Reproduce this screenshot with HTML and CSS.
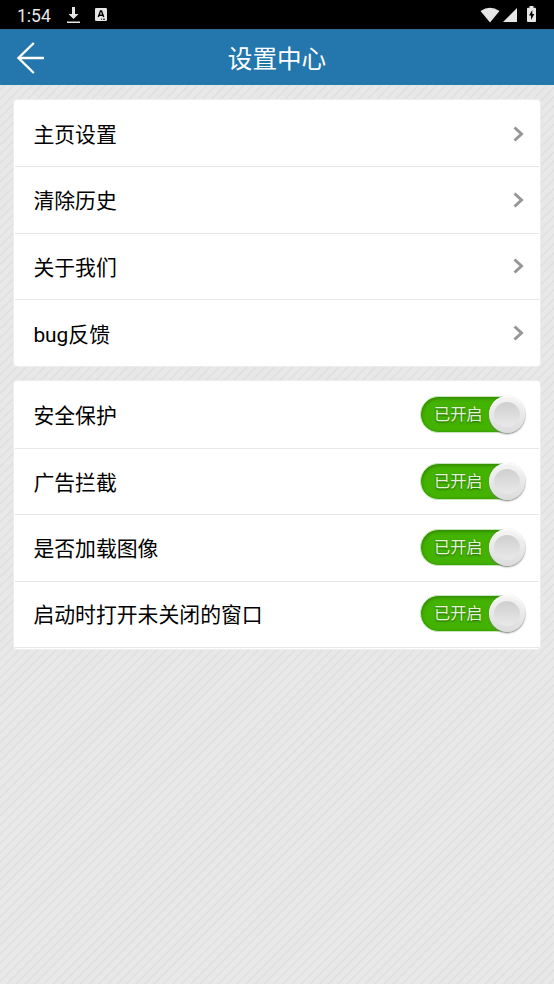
FILE: index.html
```html
<!DOCTYPE html>
<html lang="zh-CN">
<head>
<meta charset="utf-8">
<title>设置中心</title>
<link rel="stylesheet" href="styles.css">
</head>
<body>
<div class="status">
  <span class="time">1:54</span>
  <svg class="download" width="13" height="17" viewBox="0 0 13 17"><path d="M5 0h3v7h3.5L6.500 12 1.500 7H5zM0 14.500h13v1.600H0z" fill="#e6e6e6"/></svg>
  <svg class="keyboard" width="12" height="13" viewBox="0 0 12 13"><rect width="12" height="13" rx="1.300" fill="#e6e6e6"/><path d="M3.300 9 5.500 3h1L8.700 9M4.100 7.200h3.800" fill="none" stroke="#000" stroke-width="1.400"/><path d="M6 11.200h1M8 11.200h2" stroke="#000"/></svg>
  <span class="spacer"></span>
  <svg class="wifi" width="20" height="16" viewBox="0 0 20 16"><path d="M.5 4Q10-2.600 19.500 4L10 15.500z" fill="#e6e6e6"/></svg>
  <svg class="signal" width="14" height="14" viewBox="0 0 14 14"><path d="M14 0v14H0z" fill="#e6e6e6"/></svg>
  <svg class="battery" width="9" height="16" viewBox="0 0 9 16"><path d="M2.500 0h4v1.700H8q1 0 1 1V15q0 1-1 1H1q-1 0-1-1V2.700q0-1 1-1h1.500z" fill="#e6e6e6"/><path d="M5.300 4 2 9.600h2V14l3.300-6H5.300z" fill="#000"/></svg>
</div>
<header class="header">
  <svg class="back" width="29" height="32" viewBox="0 0 29 32"><path d="M17.800 1 2.500 16l15.300 15M2.500 16H28" fill="none" stroke="#fff" stroke-width="2.400"/></svg>
  <h1>设置中心</h1>
</header>
<main>
  <section class="card">
    <div class="row"><span>主页设置</span><svg class="chevron" width="11" height="16" viewBox="0 0 11 16"><path d="m1.500 1.500 7 6.500-7 6.500"/></svg></div>
    <div class="row"><span>清除历史</span><svg class="chevron" width="11" height="16" viewBox="0 0 11 16"><path d="m1.500 1.500 7 6.500-7 6.500"/></svg></div>
    <div class="row"><span>关于我们</span><svg class="chevron" width="11" height="16" viewBox="0 0 11 16"><path d="m1.500 1.500 7 6.500-7 6.500"/></svg></div>
    <div class="row"><span>bug反馈</span><svg class="chevron" width="11" height="16" viewBox="0 0 11 16"><path d="m1.500 1.500 7 6.500-7 6.500"/></svg></div>
  </section>
  <section class="card toggles">
    <div class="row"><span>安全保护</span><div class="switch"><span>已开启</span><i class="knob"></i></div></div>
    <div class="row"><span>广告拦截</span><div class="switch"><span>已开启</span><i class="knob"></i></div></div>
    <div class="row"><span>是否加载图像</span><div class="switch"><span>已开启</span><i class="knob"></i></div></div>
    <div class="row"><span>启动时打开未关闭的窗口</span><div class="switch"><span>已开启</span><i class="knob"></i></div></div>
  </section>
</main>
</body>
</html>
```
FILE: styles.css
```css
* { box-sizing: border-box; }
body {
  margin: 0;
  min-height: 984px;
  font-family: Roboto, "Noto Sans CJK SC", sans-serif;
  color: #000;
  background: repeating-linear-gradient(135deg, #e8e8e8 0, #e8e8e8 3.8px, #dedede 5.2px, #e8e8e8 6.5px);
}
svg { display: block; flex: none; }
.status {
  display: flex;
  height: 29px;
  padding: 0 18px 0 17px;
  background: #000;
  color: #e6e6e6;
}
.time { width: 50px; font-size: 17.5px; line-height: 32px; }
.download { margin-top: 7px; }
.keyboard { margin: 8px 0 0 15px; }
.spacer { flex: 1; }
.wifi { margin-top: 7px; }
.signal { margin: 8px 0 0 3px; }
.battery { margin: 6px 0 0 10px; }
.header {
  display: grid;
  grid-template-columns: 60px 1fr 60px;
  align-items: center;
  height: 56px;
  background: #2477ad;
  border-top: 1px solid #2a6c98;
  color: #fff;
}
.back { margin: 0 0 0 16px; }
.header h1 {
  margin: 4px 0 0;
  font-size: 24.6px;
  line-height: 36px;
  font-weight: 400;
  text-align: center;
}
main { padding: 14px 13px; }
.card {
  height: 268px;
  padding: 1px;
  background: #fff;
  border: 1px solid #ededed;
  border-radius: 4px;
}
.toggles { height: 270px; margin-top: 13px; padding-top: 1.5px; }
.row {
  display: flex;
  align-items: center;
  justify-content: space-between;
  height: 66.4px;
  padding: 0 15px 0 18.4px;
  border-bottom: 1px solid #e6e6e6;
  font-size: 20.85px;
}
.card:not(.toggles) .row:last-child { border-bottom: 0; }
.row > span { margin-top: -1.6px; }
.toggles .row > span { margin-top: -2px; }
.chevron path { fill: none; stroke: #969696; stroke-width: 3; }
.toggles .row { padding-right: 14px; }
.switch {
  position: relative;
  width: 105px;
  height: 37px;
  margin-top: -1px;
  border-radius: 19px;
  border: 1px solid #c9e5bd;
  background: #43b200;
  box-shadow: inset 1px 2px 3px #348f00, inset 0 -1px 2px #3aa000;
}
.switch span {
  display: block;
  padding-left: 13px;
  font-size: 16.2px;
  line-height: 35px;
  color: #e2f3d8;
  text-shadow: 0 1px 2px #1d5b00;
}
.knob {
  position: absolute;
  top: -1px;
  right: -1px;
  width: 36px;
  height: 37px;
  border-radius: 50%;
  background: linear-gradient(#f5f5f5, #dcdcdc);
  box-shadow: 0 1px 2px #777, inset 0 1px 1px #fff;
}
.knob::after {
  content: "";
  position: absolute;
  inset: 6px 5px;
  border-radius: 50%;
  background: linear-gradient(#cfcfcf, #e9e9e9);
  filter: blur(.5px);
}
```
